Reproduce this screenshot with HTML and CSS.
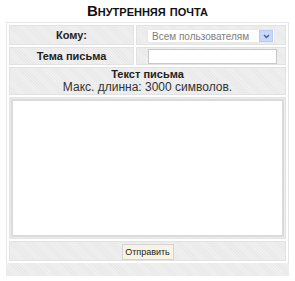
FILE: index.html
```html
<!DOCTYPE html>
<html lang="ru">
<head>
    <meta charset="UTF-8">
    <link rel="stylesheet" href="styles.css">
    <title>Внутренняя почта</title>
</head>
<body>
    <h1 class="title">Внутренняя почта</h1>

    <div class="mail-frame">
        <table class="mail-form">
            <tr class="row-short">
                <td class="label">Кому:</td>
                <td class="field">
                    <div class="select-box">
                        <span class="select-text">Всем пользователям</span>
                        <span class="select-arrow">
                            <svg width="7" height="5" viewBox="0 0 7 5"><path d="M1 1 L3.5 3.5 L6 1" fill="none" stroke="#4d6185" stroke-width="1.4"/></svg>
                        </span>
                    </div>
                </td>
            </tr>
            <tr class="row-short">
                <td class="label">Тема письма</td>
                <td class="field"><input type="text" class="subject"></td>
            </tr>
            <tr>
                <td class="label text-head" colspan="2">
                    Текст письма
                    <div class="hint">Макс. длинна: 3000 символов.</div>
                </td>
            </tr>
            <tr>
                <td class="text-cell" colspan="2"><textarea class="body-text"></textarea></td>
            </tr>
            <tr>
                <td class="send-cell" colspan="2"><button class="send">Отправить</button></td>
            </tr>
        </table>
        <div class="footer-strip"></div>
    </div>
</body>
</html>
```

FILE: styles.css
```css
* {
    box-sizing: border-box;
}

body {
    margin: 0;
    padding: 3px 6px 0 6px;
    background: #fff;
    font-family: "Liberation Sans", Arial, sans-serif;
    color: #222;
}

.title {
    margin: 0;
    height: 19px;
    font-size: 15px;
    line-height: 16px;
    font-weight: bold;
    font-variant: small-caps;
    text-align: center;
    color: #111;
}

.mail-frame {
    width: 283px;
    border: 1px solid #e6e6e6;
    border-bottom: none;
}

.mail-form {
    width: 100%;
    border-collapse: separate;
    border-spacing: 2px;
}

.mail-form td {
    border: 1px solid #e2e2e2;
    padding: 0;
    background: repeating-linear-gradient(45deg, #e9e9e9 0 1px, #f0f0f0 1px 2px);
}

.row-short td {
    height: 18px;
}

.label {
    width: 125px;
    text-align: center;
    font-size: 11px;
    font-weight: bold;
    color: #222;
}

.field {
    text-align: center;
}

.select-box {
    display: inline-flex;
    align-items: center;
    justify-content: space-between;
    width: 128px;
    height: 14px;
    margin-top: 1px;
    padding: 0 1px 0 4px;
    background: #fff;
    border: 1px solid #e8e8e8;
    vertical-align: middle;
}

.select-text {
    font-size: 10px;
    color: #808080;
}

.select-arrow {
    display: flex;
    align-items: center;
    justify-content: center;
    width: 14px;
    height: 12px;
    background: #c8d8fb;
    border: 1px solid #b8caf0;
}

.subject {
    display: block;
    width: 129px;
    height: 15px;
    margin: 1px 0 0 11px;
    border: 1px solid #c8c8c8;
    background: #fff;
}

.text-head {
    height: 27px;
    width: auto;
    line-height: 12px;
}

.hint {
    font-size: 12px;
    font-weight: normal;
    line-height: 14px;
    color: #333;
}

.text-cell {
    height: 142px;
    padding: 1px !important;
}

.body-text {
    display: block;
    width: 100%;
    height: 138px;
    margin: 0;
    border: 2px solid #dadada;
    background: #fff;
    resize: none;
}

.send-cell {
    height: 20px;
    text-align: center;
}

.send {
    width: 52px;
    height: 16px;
    padding: 0;
    font-family: "Liberation Sans", Arial, sans-serif;
    font-size: 9px;
    color: #222;
    background: #f7f4e2;
    border: 1px solid #d4d4d4;
    vertical-align: middle;
}

.footer-strip {
    height: 13px;
    margin: 0 -1px;
    background: repeating-linear-gradient(45deg, #e9e9e9 0 1px, #f0f0f0 1px 2px);
}
```
